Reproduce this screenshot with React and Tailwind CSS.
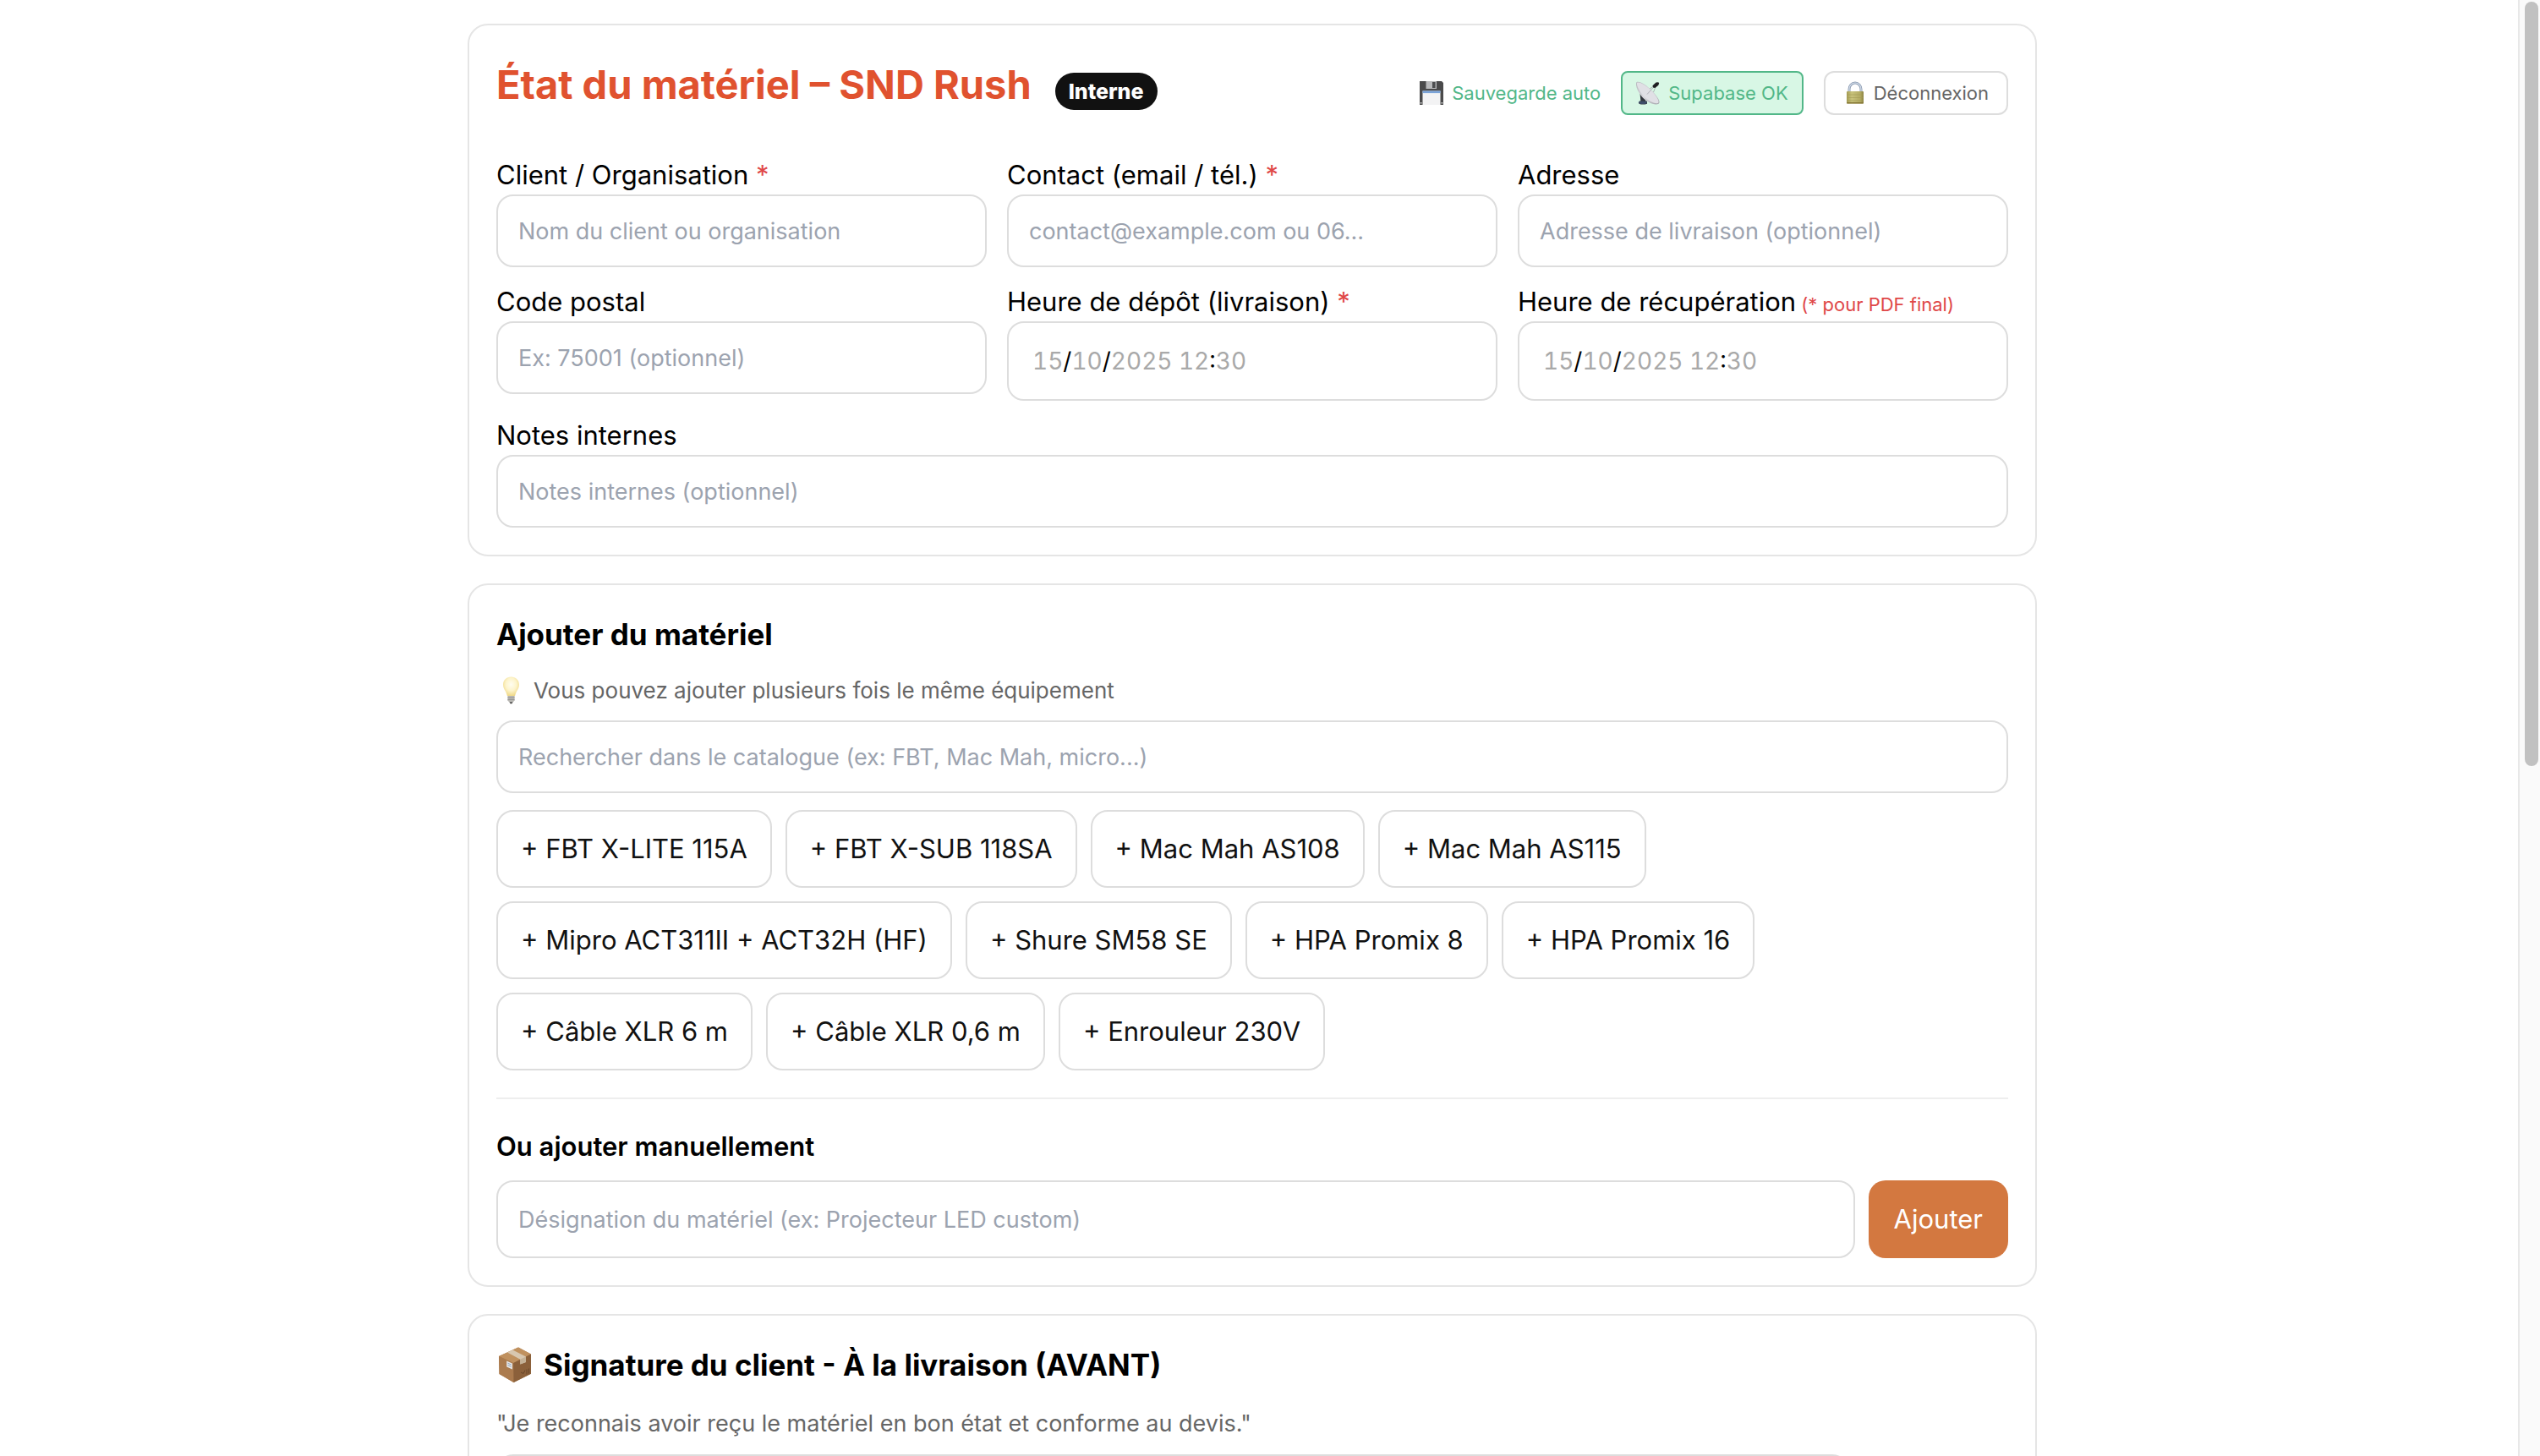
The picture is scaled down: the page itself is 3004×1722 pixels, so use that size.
import React from "react";

const CATALOG = [
  "FBT X-LITE 115A",
  "FBT X-SUB 118SA",
  "Mac Mah AS108",
  "Mac Mah AS115",
  "Mipro ACT311II + ACT32H (HF)",
  "Shure SM58 SE",
  "HPA Promix 8",
  "HPA Promix 16",
  "Câble XLR 6 m",
  "Câble XLR 0,6 m",
  "Enrouleur 230V",
];

function FloppyIcon() {
  return (
    <svg viewBox="0 0 28 28" className="h-7 w-7 shrink-0" aria-hidden="true">
      <path d="M0.5 0H26l2 2v26H0V0z" fill="#4a4a4b" />
      <rect x="7.5" y="0" width="12.5" height="9" fill="#b9babc" />
      <rect x="15" y="1" width="3.6" height="7" fill="#4d4e50" />
      <rect x="3.5" y="11.5" width="21" height="16.5" fill="#f3f3f4" />
      <rect x="3.5" y="11.5" width="21" height="2.6" fill="#7aa3d8" />
      <rect x="0.8" y="25" width="1.6" height="1.6" fill="#d8d8d8" />
      <rect x="25.6" y="25" width="1.6" height="1.6" fill="#d8d8d8" />
    </svg>
  );
}

function DishIcon() {
  return (
    <svg viewBox="0 0 28 28" className="h-7 w-7 shrink-0" aria-hidden="true">
      <defs>
        <linearGradient id="dish" x1="0" y1="0" x2="1" y2="1">
          <stop offset="0" stopColor="#b4b5bb" />
          <stop offset="0.5" stopColor="#d9d9de" />
          <stop offset="1" stopColor="#a4a5ab" />
        </linearGradient>
      </defs>
      <path d="M4.500 14l6 5.500.8 4H13v3.200q-5 1.800-9.600 0l.4-3.200h1.600z" fill="#34383f" />
      <ellipse cx="7.800" cy="25.200" rx="5" ry="1.800" fill="#3e4d69" />
      <path d="M.6 1.200C3-.8 12 4 19 11.500s10.500 13.700 7.200 15.500C21 28.800 12 24.500 6.500 18S-1.300 3 .6 1.200z" fill="url(#dish)" />
      <path d="M1.200 1.800C4 .3 12 5 18.400 11.800s9.800 12.700 7.400 14.300C21 27 13 22.500 8 16.500S-.2 3.500 1.200 1.800z" fill="#e0e0e5" />
      <path d="M13 15.500L22.500 5M16 9l6-4M20.500 13l3-7.500" stroke="#9b9ca2" strokeWidth="0.700" fill="none" />
      <path d="M19.500 5.200l4-3.700 2.700-.3 1 1-.8 2.500-4 3.300-2.300-.6z" fill="#1d1e20" />
    </svg>
  );
}

function LockIcon() {
  return (
    <svg viewBox="0 0 28 28" className="h-7 w-7 shrink-0" aria-hidden="true">
      <defs>
        <linearGradient id="lock" x1="0" y1="0" x2="1" y2="0">
          <stop offset="0" stopColor="#a49b52" />
          <stop offset="0.3" stopColor="#c9c37c" />
          <stop offset="0.8" stopColor="#b3ab62" />
          <stop offset="1" stopColor="#8b8242" />
        </linearGradient>
      </defs>
      <path d="M7 14V9.500a7 7.500 0 0 1 14 0V14" fill="none" stroke="#8e9db3" strokeWidth="3" />
      <path d="M7 13V9.500a7 7.500 0 0 1 14 0V13" fill="none" stroke="#d5dfec" strokeWidth="1.200" />
      <rect x="4" y="12" width="20" height="14.500" rx="1" fill="url(#lock)" />
      <path d="M4.500 16h19M4.500 19.500h19M4.500 23h19" stroke="#a39b55" strokeWidth="0.600" />
      <rect x="4" y="25" width="20" height="1.500" rx="0.700" fill="#857737" />
    </svg>
  );
}

function BulbIcon() {
  return (
    <svg viewBox="0 0 34 34" className="h-[34px] w-[34px] shrink-0" aria-hidden="true">
      <defs>
        <radialGradient id="bulb" cx="0.5" cy="0.4" r="0.6">
          <stop offset="0" stopColor="#fffdf0" />
          <stop offset="0.55" stopColor="#fdf4cb" />
          <stop offset="1" stopColor="#f0d988" />
        </radialGradient>
      </defs>
      <path d="M17.500 1.500c5.600 0 9.500 4 9.500 9.300 0 5.200-3.700 7.400-4.900 13.200h-9.200C11.700 18.200 8 16 8 10.800c0-5.300 3.900-9.300 9.500-9.300z" fill="url(#bulb)" />
      <path d="M13.400 24h8.200v5.500l-2 2h-4.200l-2-2z" fill="#b9b8b4" />
      <path d="M13.400 26h8.200M13.400 28.500h8.200" stroke="#8d8c89" strokeWidth="0.800" />
      <path d="M15.500 31.300h4l-1 2h-2z" fill="#4f4e4c" />
    </svg>
  );
}

function BoxIcon() {
  return (
    <svg viewBox="0 0 44 44" className="h-11 w-11 shrink-0" aria-hidden="true">
      <path d="M3 12L26 1.500 41 9.500v23.300L20.500 43 3.500 33z" fill="#a9794c" />
      <path d="M3 12L26 1.500 41 9.500 20.200 20z" fill="#c0915f" />
      <path d="M3 12l17.200 8 .3 23L3.500 33z" fill="#ab7b4e" />
      <path d="M20.200 20L41 9.500v23.300L20.500 43z" fill="#8b603a" />
      <path d="M13 7.500l6.300-3L35 12.400v6.500l-6.700 2.600v-5.800z" fill="#d8c7b0" />
      <path d="M28.300 15.700L35 12.400v6.500l-6.700 2.600z" fill="#c4b196" />
      <path d="M12.200 17.500l6.700 3v7l-6.700-3z" fill="#e7e7e6" />
      <path d="M13.500 20.200l4 1.800M13.500 22.500l4 1.800" stroke="#8fa2ba" strokeWidth="1" />
      <path d="M29 31l3 1.500 2-4M36 27.500v6M38.500 26.500v6" stroke="#68462a" strokeWidth="1" fill="none" />
    </svg>
  );
}

function Card({ children }) {
  return (
    <section className="mb-8 rounded-3xl border-2 border-[#e5e5e5] bg-white px-8 pb-8">
      {children}
    </section>
  );
}

const inputClass =
  "block w-full rounded-[20px] border-2 border-[#dddddd] bg-white px-6 text-[27px] leading-[34px] text-black placeholder:text-[#9ca3af] placeholder:opacity-100";

function Field({ id, label, mark, placeholder }) {
  return (
    <div>
      <Label id={id} label={label} mark={mark} />
      <input id={id} type="text" placeholder={placeholder} className={inputClass + " h-[86px]"} />
    </div>
  );
}

function Label({ id, label, mark, note }) {
  return (
    <label htmlFor={id} className="mb-1.5 block text-[31px] leading-[34px] text-black">
      {label}
      {mark && <span className="text-[#e04848]"> *</span>}
      {note && <span className="text-[22px] leading-none text-[#e04848]"> {note}</span>}
    </label>
  );
}

function DateField({ id, label, mark, note }) {
  return (
    <div>
      <Label id={id} label={label} mark={mark} note={note} />
      <div className="relative flex h-[94px] items-center rounded-[20px] border-2 border-[#dddddd] bg-white px-7 text-[28px] leading-[34px] text-[#a9a9a9] tabular-nums">
        <span aria-hidden="true">
          15<b className="font-normal text-black">/</b>10<b className="font-normal text-black">/</b>2025 12
          <b className="font-normal text-black">:</b>30
        </span>
        <input id={id} type="datetime-local" className="absolute inset-0 h-full w-full opacity-0" />
      </div>
    </div>
  );
}

export default function App() {
  return (
    <div className="flex h-screen overflow-hidden bg-white font-['Inter','Liberation_Sans',sans-serif] text-black">
      <main className="min-w-0 flex-1 overflow-hidden pr-4">
        <div className="mx-auto max-w-[1920px] px-8 pt-7">
          <Card>
            <header className="flex items-start justify-between pt-8 pb-[52px]">
              <div className="flex items-center gap-7">
                <h1 className="text-[47px] leading-[76px] font-bold text-[#e0522f]">État du matériel – SND Rush</h1>
                <span className="mt-4 rounded-full bg-[#111111] px-4 text-[25px] leading-[44px] font-extrabold text-white">Interne</span>
              </div>
              <div className="mt-[22px] flex items-center gap-6 text-[22px]">
                <span className="flex items-center gap-2.5 text-[#52b788]">
                  <FloppyIcon />
                  Sauvegarde auto
                </span>
                <span className="flex h-[52px] items-center gap-2.5 rounded-lg border-2 border-[#52b788] bg-[#d8f7e5] px-4 text-[#52b788]">
                  <DishIcon />
                  Supabase OK
                </span>
                <button type="button" className="flex h-[52px] items-center gap-2 rounded-xl border-2 border-[#dddddd] bg-white px-[21px] text-[#666666]">
                  <LockIcon />
                  Déconnexion
                </button>
              </div>
            </header>
            <div className="grid grid-cols-3 items-start gap-6">
              <Field id="client" label="Client / Organisation" mark placeholder="Nom du client ou organisation" />
              <Field id="contact" label="Contact (email / tél.)" mark placeholder="contact@example.com ou 06..." />
              <Field id="adresse" label="Adresse" placeholder="Adresse de livraison (optionnel)" />
              <Field id="cp" label="Code postal" placeholder="Ex: 75001 (optionnel)" />
              <DateField id="depot" label="Heure de dépôt (livraison)" mark />
              <DateField id="recup" label="Heure de récupération" note="(* pour PDF final)" />
              <div className="col-span-3">
                <Field id="notes" label="Notes internes" placeholder="Notes internes (optionnel)" />
              </div>
            </div>
          </Card>

          <Card>
            <h2 className="pt-8 text-[35px] leading-[52px] font-bold">Ajouter du matériel</h2>
            <p className="mt-4 mb-3 flex h-12 items-center gap-2.5 text-[26px] text-[#666666]">
              <BulbIcon />
              Vous pouvez ajouter plusieurs fois le même équipement
            </p>
            <input
              type="text"
              aria-label="Rechercher dans le catalogue"
              placeholder="Rechercher dans le catalogue (ex: FBT, Mac Mah, micro...)"
              className={inputClass + " h-[86px]"}
            />
            <div className="mt-5 flex max-w-[1600px] flex-wrap gap-4">
              {CATALOG.map((name) => (
                <button
                  key={name}
                  type="button"
                  className="h-[92px] rounded-[20px] border-2 border-[#dddddd] bg-white px-[27px] text-[31px] text-[#111111]"
                >
                  + {name}
                </button>
              ))}
            </div>
            <hr className="mt-8 border-t-2 border-[#eeeeee]" />
            <h3 className="mt-8 text-[31px] leading-[48px] font-semibold">Ou ajouter manuellement</h3>
            <div className="mt-4 flex gap-4">
              <input
                type="text"
                aria-label="Désignation du matériel"
                placeholder="Désignation du matériel (ex: Projecteur LED custom)"
                className={inputClass + " h-[92px] min-w-0 flex-1"}
              />
              <button type="button" className="h-[92px] rounded-[20px] bg-[#d37840] px-[30px] text-[31px] text-white">
                Ajouter
              </button>
            </div>
          </Card>

          <Card>
            <h2 className="flex items-center gap-3 pt-8 text-[35px] leading-[52px] font-bold">
              <BoxIcon />
              Signature du client - À la livraison (AVANT)
            </h2>
            <p className="mt-6 mb-4 text-[27px] leading-[40px] text-[#666666]">
              "Je reconnais avoir reçu le matériel en bon état et conforme au devis."
            </p>
            <canvas className="block h-[400px] w-full max-w-[1600px] rounded-[20px] border-2 border-[#dddddd]" aria-label="Signature" />
          </Card>
        </div>
      </main>
      <div className="h-full w-[26px] shrink-0 border-l-2 border-[#e8e8e8] bg-[#fafafa] py-0.5 pr-0.5 pl-1.5" aria-hidden="true">
        <div className="h-[904px] w-4 rounded-full bg-[#c1c1c1]" />
      </div>
    </div>
  );
}
